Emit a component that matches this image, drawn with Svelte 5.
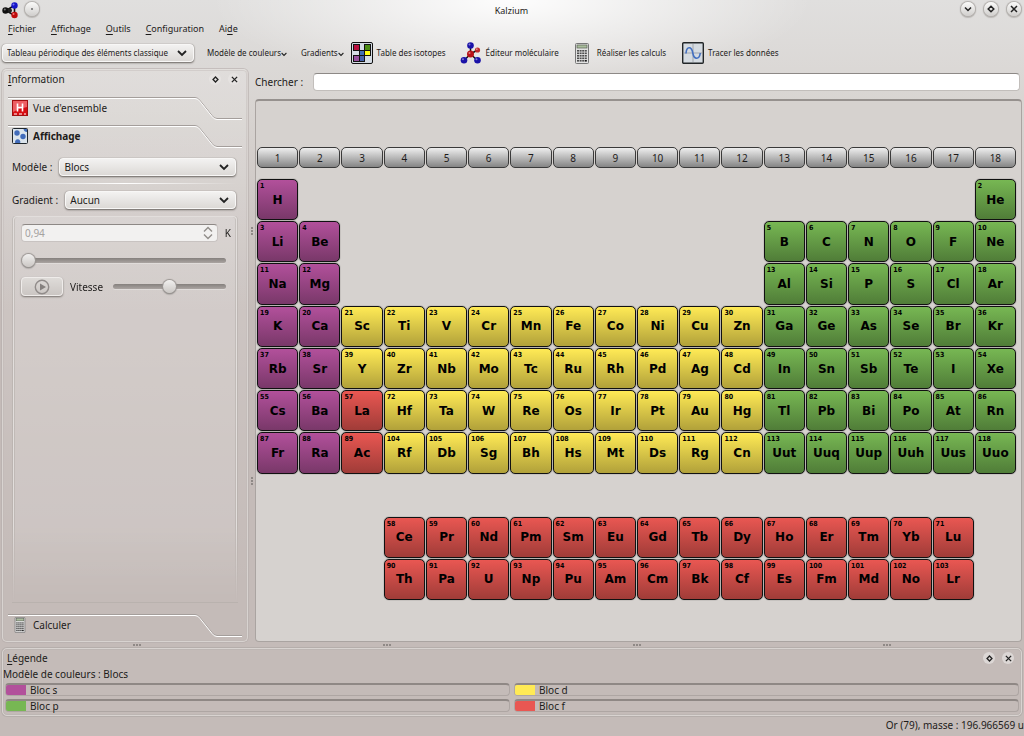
<script>
  const SYMBOLS = (
    'H He Li Be B C N O F Ne Na Mg Al Si P S Cl Ar K Ca Sc Ti V Cr Mn Fe Co Ni Cu Zn Ga Ge As Se Br Kr ' +
    'Rb Sr Y Zr Nb Mo Tc Ru Rh Pd Ag Cd In Sn Sb Te I Xe Cs Ba La Ce Pr Nd Pm Sm Eu Gd Tb Dy Ho Er Tm Yb Lu ' +
    'Hf Ta W Re Os Ir Pt Au Hg Tl Pb Bi Po At Rn Fr Ra Ac Th Pa U Np Pu Am Cm Bk Cf Es Fm Md No Lr ' +
    'Rf Db Sg Bh Hs Mt Ds Rg Cn Uut Uuq Uup Uuh Uus Uuo'
  ).split(' ');

  // Each run: first atomic number, last atomic number, row, first column
  const MAIN_RUNS = [
    [1, 1, 1, 1], [2, 2, 1, 18],
    [3, 4, 2, 1], [5, 10, 2, 13],
    [11, 12, 3, 1], [13, 18, 3, 13],
    [19, 36, 4, 1], [37, 54, 5, 1],
    [55, 57, 6, 1], [72, 86, 6, 4],
    [87, 89, 7, 1], [104, 118, 7, 4]
  ];
  const F_RUNS = [[58, 71, 1, 4], [90, 103, 2, 4]];

  function block(number, column) {
    if (number === 57 || number === 89) return 'f';
    if (column < 3) return 's';
    return column < 13 ? 'd' : 'p';
  }

  function expand(runs, fixedBlock) {
    return runs.flatMap(([first, last, row, start]) =>
      Array.from({ length: last - first + 1 }, (_, i) => {
        const number = first + i;
        const column = start + i;
        return { number, symbol: SYMBOLS[number - 1], row, column, block: fixedBlock ?? block(number, column) };
      })
    );
  }

  const mainElements = expand(MAIN_RUNS);
  const fElements = expand(F_RUNS, 'f');
  const groups = Array.from({ length: 18 }, (_, i) => i + 1);
  const legend = ['s', 'd', 'p', 'f'];
  let search = $state('');
  let temperature = $state(0);
  let speed = $state(50);
</script>

{#snippet chevron()}
  <svg class="chevron" viewBox="0 0 10 7" aria-hidden="true"><path d="M1 1l4 4 4-4" /></svg>
{/snippet}

{#snippet diamond()}
  <svg viewBox="0 0 8 8" aria-hidden="true"><path d="M4 1.2L6.8 4 4 6.8 1.2 4z" /></svg>
{/snippet}

{#snippet cross()}
  <svg viewBox="0 0 8 8" aria-hidden="true"><path d="M1 1l6 6M7 1L1 7" /></svg>
{/snippet}

{#snippet calculator()}
  <svg class="calc" viewBox="0 0 14 21" aria-hidden="true">
    <rect x=".5" y=".5" width="13" height="20" rx="1" fill="#e2e2e2" stroke="#777" />
    <rect x="2" y="2" width="10" height="3" fill="#a9bd9c" stroke="#596253" stroke-width=".7" />
    {#each [7, 9.5, 12, 14.5, 17] as y}
      {#each [2, 4.6, 7.2, 9.8] as x}
        <rect {x} {y} width="2" height="1.6" fill={x > 9 && y > 15 ? '#111' : '#4d4d4d'} />
      {/each}
    {/each}
  </svg>
{/snippet}

{#snippet tile(e)}
  <button class="tile {e.block}" style="grid-row:{e.row};grid-column:{e.column}">
    <span class="num">{e.number}</span>
    <span class="sym">{e.symbol}</span>
  </button>
{/snippet}

{#snippet tabEdge()}
  <svg class="edge" viewBox="0 0 50 23" aria-hidden="true">
    <path d="M0 .5h3q3 0 5 3L20 18.500q2 3 5 3h25" fill="none" stroke="#a49e9b" />
    <path d="M0 1.500h3q3 0 5 3L20 19.500q2 3 5 3h25" fill="none" stroke="#fff" />
  </svg>
{/snippet}

<div class="window">
  <header class="title">
    <div class="left">
      <svg class="logo" viewBox="0 0 18 18" aria-hidden="true">
        <path d="M4 9.500l8.500-5v10z" fill="none" stroke="#111" stroke-width="1.600" />
        <circle cx="3.500" cy="9.500" r="3.200" fill="#111" />
        <circle cx="8" cy="9.500" r="2" fill="#222" />
        <circle cx="12.500" cy="4.500" r="3.200" fill="#1515c8" />
        <circle cx="12.500" cy="14" r="3.200" fill="#c00d0d" />
        <circle cx="2.800" cy="8.500" r="1" fill="#777" />
        <circle cx="11.500" cy="3.500" r="1" fill="#7777ee" />
        <circle cx="11.500" cy="13" r="1" fill="#ee7777" />
      </svg>
      <button class="round" aria-label="Tous les bureaux"><i></i></button>
    </div>
    <h1>Kalzium</h1>
    <div class="right">
      <button class="round" aria-label="Réduire">
        <svg viewBox="0 0 8 8" aria-hidden="true"><path d="M1 2.500l3 3 3-3" /></svg>
      </button>
      <button class="round" aria-label="Agrandir">{@render diamond()}</button>
      <button class="round" aria-label="Fermer">{@render cross()}</button>
    </div>
  </header>

  <nav class="menu">
    <button><u>F</u>ichier</button>
    <button><u>A</u>ffichage</button>
    <button><u>O</u>utils</button>
    <button><u>C</u>onfiguration</button>
    <button>Ai<u>d</u>e</button>
  </nav>

  <div class="toolbar">
    <span class="combo table-kind">
      <select aria-label="Tableau"><option>Tableau périodique des éléments classique</option></select>
      {@render chevron()}
    </span>
    <button class="drop scheme">Modèle de couleurs{@render chevron()}</button>
    <button class="drop grad">Gradients{@render chevron()}</button>
    <button class="isotopes">
      <svg class="ico" viewBox="0 0 22 22" aria-hidden="true">
        <rect x=".5" y=".5" width="21" height="21" rx="1.500" fill="#d5dce4" stroke="#111" />
        <g stroke="#111">
          <rect x="2.500" y="2.500" width="6" height="6" fill="#b90f3d" />
          <rect x="13.500" y="2.500" width="6" height="6" fill="#4c8c14" />
          <rect x="8.500" y="8.500" width="5" height="5" fill="#426fb5" />
          <rect x="13.500" y="8.500" width="6" height="5" fill="#ffff12" />
          <rect x="2.500" y="13.500" width="6" height="6" fill="#97509e" />
          <rect x="8.500" y="13.500" width="5" height="6" fill="#4663aa" />
        </g>
      </svg>
      Table des isotopes
    </button>
    <button class="editor">
      <svg class="ico" viewBox="0 0 22 22" aria-hidden="true">
        <path d="M10.500 12V4M10.500 12L4 18.500M10.500 12l7 6.500M10.500 12l7-4" stroke="#111" stroke-width="1.500" />
        <g fill="#1a12a8">
          <circle cx="10.500" cy="3.500" r="3.300" />
          <circle cx="4" cy="18.300" r="3.300" />
          <circle cx="17.500" cy="18.300" r="3.300" />
        </g>
        <circle cx="10.500" cy="12" r="3.500" fill="#b81218" />
        <circle cx="17.500" cy="8" r="2.600" fill="#c22a2a" />
        <g fill="#fff" opacity=".45">
          <circle cx="9.500" cy="2.500" r="1" />
          <circle cx="3" cy="17.300" r="1" />
          <circle cx="16.500" cy="17.300" r="1" />
          <circle cx="9.500" cy="11" r="1" />
          <circle cx="16.800" cy="7.200" r=".9" />
        </g>
      </svg>
      Éditeur moléculaire
    </button>
    <button class="compute">{@render calculator()}Réaliser les calculs</button>
    <button class="plot">
      <svg class="ico" viewBox="0 0 22 22" aria-hidden="true">
        <rect x=".7" y=".7" width="20.600" height="20.600" rx="1" fill="#d5dbe1" stroke="#222628" stroke-width="1.400" />
        <path d="M11 2v18M2 11h18" stroke="#b3b8bf" stroke-width="1.500" />
        <path d="M4 11.500C4.500 4 9.500 4 10.800 11s6.500 7 7.500 0" fill="none" stroke="#426fc0" stroke-width="1.600" />
      </svg>
      Tracer les données
    </button>
  </div>

  <div class="main">
    <aside class="dock info">
      <div class="dock-head">
        <h2><u>I</u>nformation</h2>
        <button class="mini" aria-label="Détacher Information">{@render diamond()}</button>
        <button class="mini" aria-label="Fermer Information">{@render cross()}</button>
      </div>

      <button class="tab">
        <span>
          <svg class="tab-ico" viewBox="0 0 16 16" aria-hidden="true">
            <rect x=".5" y=".5" width="15" height="15" fill="#d80d12" stroke="#a01010" />
            <path d="M1 1h14v6q-7 1-14 5z" fill="#ed6064" />
            <path d="M5.500 3.500v8M10.500 3.500v8M5.500 7.500h5" stroke="#fff" stroke-width="1.600" />
            <path d="M2 14h3M7 14h3M12 14h2" stroke="#fff" />
          </svg>
          Vue d'ensemble
        </span>
        {@render tabEdge()}
      </button>
      <button class="tab current">
        <span>
          <svg class="tab-ico" viewBox="0 0 16 16" aria-hidden="true">
            <rect x=".5" y=".5" width="15" height="15" rx="1" fill="#dbe4ec" stroke="#20272c" />
            <g fill="#426cba">
              <circle cx="5" cy="5" r="2.700" /><circle cx="11" cy="8.500" r="2.700" />
              <path d="M3.200 15a2.700 2.700 0 1 1 5 0zM11.500 1H15v3q-3 0-3.500-3z" />
            </g>
          </svg>
          Affichage
        </span>
        {@render tabEdge()}
      </button>

      <div class="panel">
        <div class="field">
          <label for="model">Modèle :</label>
          <span class="combo">
            <select id="model"><option>Blocs</option></select>
            {@render chevron()}
          </span>
        </div>
        <hr />
        <div class="field">
          <label for="gradient">Gradient :</label>
          <span class="combo">
            <select id="gradient"><option>Aucun</option></select>
            {@render chevron()}
          </span>
        </div>
        <div class="group">
          <div class="spin-row">
            <span class="spin">
              <input id="kelvin" type="text" value="0,94" disabled />
              <svg viewBox="0 0 10 14" aria-hidden="true"><path d="M1 5.500l4-4 4 4M1 8.500l4 4 4-4" /></svg>
            </span>
            <label for="kelvin">K</label>
          </div>
          <input class="slider" type="range" aria-label="Température" bind:value={temperature} />
          <div class="speed-row">
            <button class="play" aria-label="Lecture">
              <svg viewBox="0 0 16 16" aria-hidden="true">
                <circle cx="8" cy="8" r="6.700" fill="none" stroke="#918c8a" stroke-width="1.400" />
                <path d="M6 4.500l6 3.500-6 3.500z" fill="#85807e" />
              </svg>
            </button>
            <label for="speed">Vitesse</label>
            <input class="slider" id="speed" type="range" bind:value={speed} />
          </div>
        </div>
      </div>

      <button class="tab">
        <span>{@render calculator()}Calculer</span>
        {@render tabEdge()}
      </button>
    </aside>

    <div class="grip vertical"><i></i><i></i></div>

    <main>
      <div class="search">
        <label for="search">Chercher :</label>
        <input id="search" type="text" bind:value={search} />
      </div>
      <section class="table">
        <div class="grid">
          {#each groups as g}<button class="head">{g}</button>{/each}
        </div>
        <div class="grid periods">
          {#each mainElements as e (e.number)}{@render tile(e)}{/each}
        </div>
        <div class="grid rare">
          {#each fElements as e (e.number)}{@render tile(e)}{/each}
        </div>
      </section>
    </main>
  </div>

  <div class="grip"><i></i><i></i><i></i><i></i></div>

  <section class="dock legend">
    <div class="dock-head">
      <h2><u>L</u>égende</h2>
      <button class="mini" aria-label="Détacher Légende">{@render diamond()}</button>
      <button class="mini" aria-label="Fermer Légende">{@render cross()}</button>
    </div>
    <p>Modèle de couleurs : Blocs</p>
    <ul>
      {#each legend as b}<li><i class={b}></i>Bloc {b}</li>{/each}
    </ul>
  </section>

  <footer>Or (79), masse : 196.966569 u</footer>
</div>

<style>
  :global(body) { margin: 0; }

  .window {
    box-sizing: border-box;
    min-height: 100vh;
    display: flex;
    flex-direction: column;
    color: #1d1b1a;
    font: 10px/14px "Noto Sans", sans-serif;
    background:
      radial-gradient(ellipse 300px 88px at 50% 0, #fffffff2, #ffffff80 45%, #fff0),
      linear-gradient(#e0dfde 0, #d8d4d1 110px, #c4bbb8 310px) #c4bbb8;
  }
  .window :is(*) { box-sizing: border-box; }
  button, input, select { font: inherit; color: inherit; }
  button { padding: 0; border: 0; background: none; }
  svg { flex: none; }
  h1, h2, p, ul { margin: 0; padding: 0; font: inherit; }
  u { text-underline-offset: 2px; text-decoration-thickness: 1px; text-decoration-skip-ink: none; }

  .title {
    display: grid;
    grid-template-columns: 1fr auto 1fr;
    align-items: center;
    height: 20px;
    padding: 0 3px 0 2px;
  }
  .title h1 { font-size: 9px; padding-top: 2px; }
  .left, .right { display: flex; align-items: center; }
  .left { gap: 5px; }
  .right { justify-content: flex-end; gap: 9px; }
  .logo { width: 18px; height: 18px; }
  .round {
    display: grid;
    place-items: center;
    width: 14px;
    height: 14px;
    margin-bottom: 2px;
    border-radius: 50%;
    background: linear-gradient(#fbfbfa, #d0cecc);
    box-shadow: 0 0 1px 1px #b1aeab, 0 1px 1px 1px #bdbab7;
  }
  .round i { width: 2px; height: 2px; background: #888; }
  .round svg { width: 8px; height: 8px; }
  .round path, .mini path { fill: none; stroke: #222; stroke-width: 1.500px; }

  .menu { display: flex; gap: 15px; height: 18px; padding-left: 8px; font-size: 9px; }

  .toolbar { display: flex; align-items: center; height: 30px; padding-left: 2px; font-size: 8px; }
  .toolbar button { display: flex; align-items: center; white-space: nowrap; gap: 4px; }
  .toolbar .table-kind { width: 192px; margin-right: 13px; }
  .toolbar .drop { gap: 0; }
  .toolbar .drop .chevron { width: 6px; height: 5px; margin-top: 3px; }
  .scheme { margin-right: 14px; }
  .grad { margin-right: 7px; }
  .isotopes { margin-right: 14px; }
  .editor, .compute { margin-right: 16px; }
  .toolbar .compute { gap: 8px; }
  .ico { width: 22px; height: 22px; }
  .calc { width: 14px; height: 21px; }
  .chevron { width: 10px; height: 7px; }
  .chevron path { fill: none; stroke: #222; stroke-width: 1.800px; }

  .combo {
    display: grid;
    grid-template-columns: 1fr 16px;
    align-items: center;
    height: 18px;
    border-radius: 4px;
    border: 1px solid #f8f7f6;
    background: linear-gradient(#f3f2f1, #dcd9d6);
    box-shadow: 0 1px 2px #6b6662, 0 0 1px #8a8582;
  }
  .combo select {
    grid-area: 1 / 1 / 2 / 3;
    appearance: none;
    width: 100%;
    padding: 0 0 0 4px;
    border: 0;
    outline: 0;
    background: none;
  }
  .combo .chevron { grid-area: 1 / 2; pointer-events: none; }

  .main { flex: 1; display: flex; padding: 0 2px; }
  .dock {
    border: 1px solid #d8d3d0;
    border-radius: 5px;
    box-shadow: 0 0 0 1px #b5aeab, inset 0 0 0 1px #bdb6b3;
  }
  .info {
    display: flex;
    flex-direction: column;
    flex: none;
    width: 246px;
    margin: 1px 0 2px;
    padding: 0 5px 4px;
    background: linear-gradient(#fff2 0, #fff2 250px, #fff0 520px);
    border-color: #e2dfdc #d8d3d0 #d8d3d0;
    box-shadow: 0 0 0 1px #b5aeab99, inset 0 0 0 1px #bdb6b366;
  }
  .dock-head { display: flex; align-items: center; gap: 5px; height: 18px; }
  .dock-head h2 { flex: 1; }
  .info .dock-head { height: 27px; padding-bottom: 9px; }
  .mini {
    display: grid;
    place-items: center;
    width: 12px;
    height: 12px;
    margin-right: 2px;
    border-radius: 50%;
    background: #e9e6e4aa;
  }
  .mini svg { width: 7px; height: 7px; }

  .tab { display: flex; width: 100%; height: 23px; margin-bottom: 5px; text-align: left; }
  .tab > span {
    flex: 1;
    display: flex;
    align-items: center;
    gap: 5px;
    height: 20px;
    padding-left: 4px;
    border-top: 1px solid #a49e9b;
    box-shadow: inset 0 1px #fff;
  }
  .tab .calc { width: 12px; height: 16px; margin: 0 2px; }
  .tab:last-child { margin-bottom: 0; }
  .tab-ico { width: 16px; height: 16px; }
  .current { font-weight: 700; }
  .edge { width: 50px; height: 23px; }

  .panel { flex: 1; display: flex; flex-direction: column; padding: 5px 6px 12px 4px; }
  .field { display: flex; align-items: center; gap: 7px; height: 18px; }
  .field .combo { flex: 1; }
  hr { width: 100%; height: 1px; margin: 7px 0; border: 0; background: linear-gradient(90deg, #fff0, #fff 50%, #fff0); }
  .group {
    flex: 1;
    margin: 7px -1px 0 1px;
    padding: 7px 5px 7px 7px;
    border: 1px solid #e2dedc;
    border-bottom: 0;
    border-radius: 4px 4px 0 0;
    background: #fff2;
    box-shadow: 0 0 0 1px #aaa4a166, inset 1px 0 #aaa4a166, inset -1px 0 #aaa4a166;
    mask: linear-gradient(#000 80%, #0000) no-clip;
  }
  .spin-row, .speed-row { display: flex; align-items: center; gap: 7px; }
  .spin {
    flex: 1;
    display: flex;
    align-items: center;
    height: 18px;
    padding-right: 4px;
    border: 1px solid #c8c3c1;
    border-top-color: #8d8885;
    border-radius: 4px;
    background: #f2f1f0;
  }
  .spin input { flex: 1; min-width: 0; padding: 0 3px; border: 0; background: none; color: #a5a2a0; }
  .spin svg { width: 10px; height: 14px; }
  .spin path { fill: none; stroke: #918d8a; stroke-width: 1.400px; }
  .slider { display: block; appearance: none; width: calc(100% - 6px); height: 14px; margin: 11px 0 10px 1px; background: none; }
  .slider::-webkit-slider-runnable-track {
    height: 5px;
    border-radius: 3px;
    background: linear-gradient(#85807d, #aaa4a1);
    box-shadow: 0 1px #e0dcda;
  }
  .slider::-webkit-slider-thumb {
    appearance: none;
    width: 13px;
    height: 13px;
    margin-top: -4px;
    border-radius: 50%;
    background: linear-gradient(#f1f0ef, #cbc7c4);
    box-shadow: 0 0 1px 1px #9b9693, 0 1px 2px #666;
  }
  .speed-row .slider { flex: 1; width: auto; min-width: 0; margin: 0 5px 0 3px; }
  .play {
    display: grid;
    place-items: center;
    width: 42px;
    height: 19px;
    border: 1px solid #efecea;
    border-radius: 4px;
    background: linear-gradient(#dedbd8, #cbc6c3);
    box-shadow: 0 1px 2px #77716e;
  }
  .play svg { width: 16px; height: 16px; }

  .grip { display: flex; justify-content: space-around; height: 4px; padding: 0 12px; }
  .grip i { width: 8px; height: 2px; background: repeating-linear-gradient(90deg, #8f8986 0 2px, #0000 2px 3px); }
  .vertical {
    flex-direction: column;
    align-items: center;
    justify-content: center;
    flex: none;
    gap: 242px;
    width: 7px;
    height: auto;
    padding: 0;
  }
  .vertical i { width: 2px; height: 8px; background: repeating-linear-gradient(#8f8986 0 2px, #0000 2px 3px); }

  main { flex: 1; min-width: 0; display: flex; flex-direction: column; padding-bottom: 2px; }
  .search { display: flex; align-items: center; gap: 10px; height: 28px; padding-right: 2px; }
  .search input {
    flex: 1;
    min-width: 0;
    height: 18px;
    padding: 0 4px;
    border: 1px solid #c2bebb;
    border-top-color: #8d8986;
    border-radius: 4px;
    background: #fff;
  }
  .table {
    flex: 1;
    margin-top: 3px;
    padding: 46px 5px 30px 1px;
    border: 1px solid #aaa4a1;
    border-top: 2px solid #96918e;
    border-radius: 4px;
    background: #d6d2cf;
  }
  .grid { display: grid; grid-template-columns: repeat(18, minmax(0, 1fr)); gap: 1px; }
  .head {
    height: 21px;
    border: 1px solid #3a3a3a;
    border-radius: 5px;
    background: linear-gradient(#eee, #858585);
  }
  .periods { margin-top: 11px; }
  .rare { margin-top: 43px; }
  .tile {
    display: grid;
    place-items: center;
    aspect-ratio: 1;
    min-width: 0;
    border: 1px solid #111;
    border-radius: 5px;
    color: #000;
    font-family: "DejaVu Sans", sans-serif;
    font-weight: 700;
    box-shadow: 0 0 1px #333;
  }
  .num {
    grid-area: 1 / 1;
    place-self: start;
    padding: 2px 0 0 2px;
    font: 700 7px/8px "DejaVu Sans Condensed", "DejaVu Sans", sans-serif;
  }
  .sym { grid-area: 1 / 1; font-size: 12px; line-height: 16px; }
  .tile.s { background: linear-gradient(#b2509b, #793869); }
  .tile.p { background: linear-gradient(#77b753, #507d38); }
  .tile.d { background: linear-gradient(#ffea55, #b1a13a); }
  .tile.f { background: linear-gradient(#e95752, #a03c38); }

  .legend { margin: 0 2px; }
  .legend .dock-head { padding: 0 5px 0 4px; }
  .legend p { line-height: 15px; margin-bottom: 1px; }
  .legend ul { display: grid; grid-template-columns: 1fr 1fr; gap: 3px 4px; padding: 0 2px 3px; list-style: none; }
  .legend li {
    display: flex;
    align-items: center;
    gap: 4px;
    height: 13px;
    line-height: 10px;
    border: 1px solid #aea6a3;
    border-top: 2px solid #8f8885;
    border-radius: 4px;
  }
  .legend i { width: 20px; height: 10px; border-radius: 2px 0 0 2px; }
  i.s { background: #b2509b; }
  i.p { background: #77b753; }
  i.d { background: #ffea55; }
  i.f { background: #e95752; }

  footer { height: 20px; line-height: 19px; text-align: right; }
</style>
